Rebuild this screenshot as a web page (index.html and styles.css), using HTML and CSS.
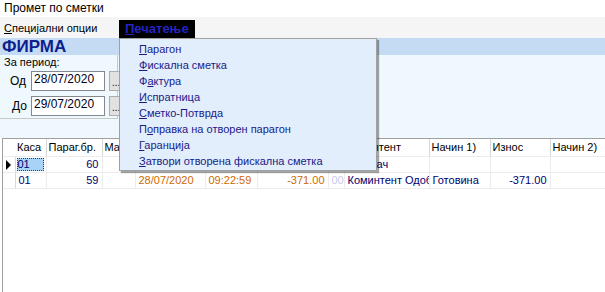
FILE: index.html
```html
<!DOCTYPE html>
<html lang="mk">
<head>
    <meta charset="UTF-8">
    <title>Промет по сметки</title>
    <link rel="stylesheet" href="styles.css">
</head>
<body>

    <!-- Title -->
    <div class="title">Промет по сметки</div>

    <!-- Menu bar -->
    <div class="menubar">
        <span class="menu-item"><u>С</u>пецијални опции</span>
        <span class="menu-item active"><u>П</u>ечатење</span>
    </div>

    <!-- Company band -->
    <div class="band">ФИРМА</div>

    <!-- Period filter -->
    <div class="filter">
        <div class="period">
            <div class="period-label">За период:</div>
            <div class="period-row">
                <span class="row-label">Од</span>
                <div class="date-box">28/07/2020</div>
                <div class="dots">...</div>
            </div>
            <div class="period-row">
                <span class="row-label">До</span>
                <div class="date-box">29/07/2020</div>
                <div class="dots">...</div>
            </div>
        </div>
    </div>

    <!-- Grid -->
    <div class="grid-wrap">
        <table class="grid">
            <colgroup>
                <col style="width:12px">
                <col style="width:31px">
                <col style="width:56px">
                <col style="width:33px">
                <col style="width:70px">
                <col style="width:52px">
                <col style="width:71px">
                <col style="width:16px">
                <col style="width:85px">
                <col style="width:61px">
                <col style="width:60px">
                <col>
            </colgroup>
            <tr class="head">
                <td></td>
                <td>Каса</td>
                <td>Параг.бр.</td>
                <td>Маса</td>
                <td>Датум</td>
                <td>Време</td>
                <td>Вкупно</td>
                <td></td>
                <td>Коминтент</td>
                <td>Начин 1)</td>
                <td>Износ</td>
                <td>Начин 2)</td>
            </tr>
            <tr>
                <td class="ind"><span class="arrow"></span></td>
                <td><span class="sel">01</span></td>
                <td class="num">60</td>
                <td></td>
                <td></td>
                <td></td>
                <td></td>
                <td></td>
                <td>Купувач</td>
                <td></td>
                <td></td>
                <td></td>
            </tr>
            <tr>
                <td class="ind"></td>
                <td>01</td>
                <td class="num">59</td>
                <td></td>
                <td class="orange">28/07/2020</td>
                <td class="orange">09:22:59</td>
                <td class="num orange">-371.00</td>
                <td class="faint">00</td>
                <td class="clip">Коминтент Одоб</td>
                <td>Готовина</td>
                <td class="num">-371.00</td>
                <td></td>
            </tr>
        </table>
    </div>

    <!-- Open dropdown of "Печатење" -->
    <div class="dropdown">
        <div class="drop-item"><u>П</u>арагон</div>
        <div class="drop-item"><u>Ф</u>искална сметка</div>
        <div class="drop-item">Ф<u>а</u>ктура</div>
        <div class="drop-item"><u>И</u>спратница</div>
        <div class="drop-item"><u>С</u>метко-Потврда</div>
        <div class="drop-item">П<u>о</u>правка на отворен парагон</div>
        <div class="drop-item"><u>Г</u>аранција</div>
        <div class="drop-item"><u>З</u>атвори отворена фискална сметка</div>
    </div>

</body>
</html>
```

FILE: styles.css
```css
/* Base */
body {
    margin: 0;
    font-family: "Liberation Sans", Arial, sans-serif;
    font-size: 11px;
    color: #000;
    background: #fff;
    width: 605px;
    height: 292px;
    overflow: hidden;
    position: relative;
}

/* Window title */
.title {
    height: 17px;
    line-height: 16px;
    padding-left: 4px;
    font-size: 12px;
}

/* Menu bar */
.menubar {
    height: 21px;
    background: #f5f5f5;
    display: flex;
    align-items: center;
    padding-left: 4px;
}

.menu-item {
    width: 115px;
    flex-shrink: 0;
    font-size: 11px;
}

.menu-item.active {
    width: auto;
    background: #000;
    color: #2424c0;
    font-weight: bold;
    font-size: 13px;
    height: 18px;
    line-height: 18px;
    padding: 0 6px 0 6px;
    margin-top: 2px;
}

/* Company band */
.band {
    height: 17px;
    background: #c5daf3;
    color: #0c1f8f;
    font-weight: bold;
    font-size: 17px;
    line-height: 17px;
    padding-left: 2px;
}

/* Filter area */
.filter {
    height: 83px;
    background: #eff8fd;
}

.period {
    width: 117px;
    height: 63px;
    border-right: 1px solid #c8c8c8;
    border-bottom: 1px solid #c8c8c8;
    display: flex;
    flex-direction: column;
}

.period-label {
    padding: 1px 0 0 4px;
    height: 13px;
    line-height: 12px;
}

.period-row {
    display: flex;
    align-items: center;
    height: 20px;
    margin-top: 2px;
}

.period-row + .period-row {
    margin-top: 5px;
}

.row-label {
    width: 31px;
    flex-shrink: 0;
    padding-left: 10px;
    box-sizing: border-box;
    font-size: 12px;
}

.period-row + .period-row .row-label {
    padding-left: 12px;
}

.date-box {
    width: 70px;
    flex-shrink: 0;
    height: 18px;
    border: 1px solid #828790;
    background: #fff;
    font-size: 12px;
    line-height: 14px;
    padding-left: 2px;
    color: #000020;
}

.dots {
    margin-left: 4px;
    width: 16px;
    flex-shrink: 0;
    height: 20px;
    box-sizing: border-box;
    background: #e1e1e1;
    border: 1px solid #adadad;
    font-size: 10px;
    line-height: 22px;
    padding-left: 2px;
}

/* Grid */
.grid-wrap {
    margin-left: 2px;
    border-left: 1px solid #a0a0a0;
    border-top: 1px solid #a0a0a0;
    height: 160px;
    background: #fff;
}

.grid {
    border-collapse: collapse;
    table-layout: fixed;
    width: 603px;
}

.grid td {
    height: 15px;
    padding: 0 3px;
    white-space: nowrap;
    overflow: hidden;
    border-right: 1px solid #ececec;
    border-bottom: 1px solid #ececec;
    color: #00006e;
    font-size: 11px;
    line-height: 15px;
}

.grid .head td {
    height: 17px;
    color: #000;
    font-size: 11px;
    padding-left: 2px;
    border-right: 1px solid #d8d8d8;
}

.grid .head td:first-child {
    border-right: none;
}

.grid td.ind {
    padding: 0;
    border-right: 1px solid #d8d8d8;
}

.arrow {
    display: block;
    width: 0;
    height: 0;
    margin-left: 3px;
    border-top: 5px solid transparent;
    border-bottom: 5px solid transparent;
    border-left: 5px solid #000;
}

.sel {
    display: inline-block;
    width: 26px;
    height: 13px;
    line-height: 13px;
    margin-left: -2px;
    padding-left: 1px;
    background: #a9d3f6;
    outline: 1px dotted #404040;
    outline-offset: -1px;
}

.grid td.num {
    text-align: right;
}

.grid td.orange {
    color: #d06a00;
}

.grid td.faint {
    color: #c8c8ee;
}

.grid td.clip {
    text-overflow: clip;
}

/* Dropdown menu */
.dropdown {
    position: absolute;
    left: 119px;
    top: 38px;
    width: 256px;
    padding: 2px 0 1px;
    background: #e2eefc;
    border: 1px solid #a0a0a0;
    box-shadow: 2px 2px 1px rgba(0, 0, 0, 0.35);
}

.drop-item {
    height: 16px;
    line-height: 16px;
    padding-left: 19px;
    color: #1a1a8a;
    font-size: 11px;
}
```
